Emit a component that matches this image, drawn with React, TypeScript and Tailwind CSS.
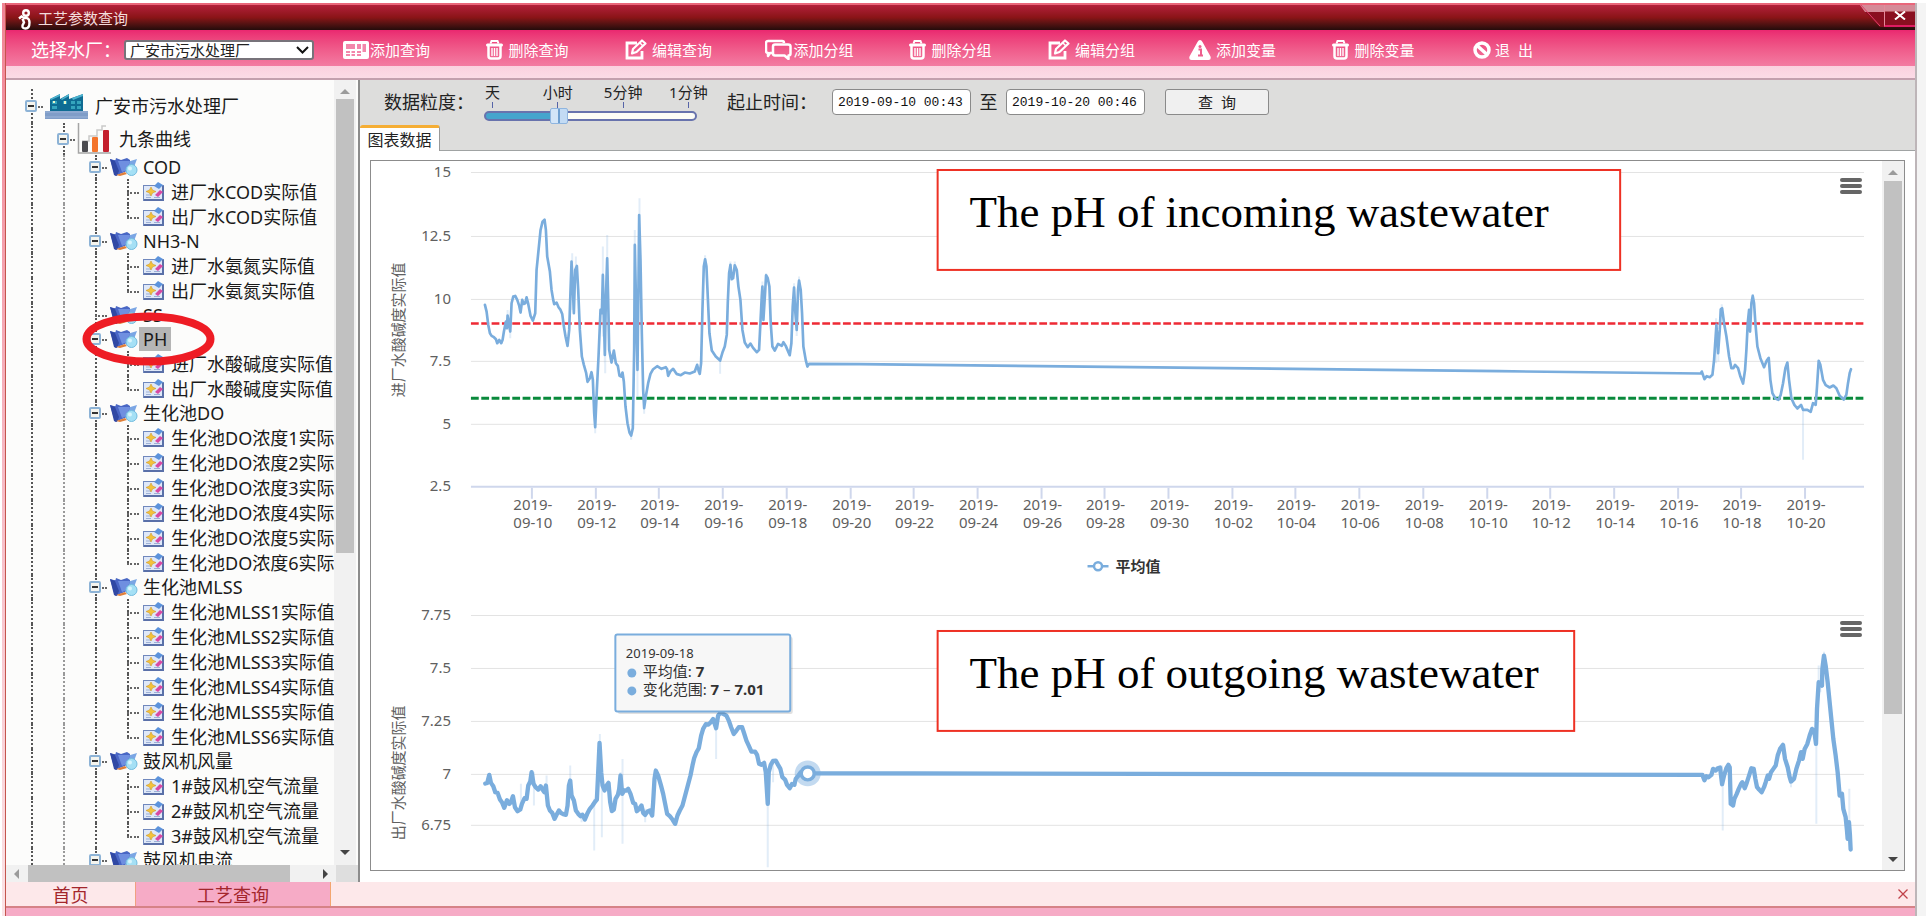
import { useState } from 'react'
import type { ReactNode } from 'react'
import clsx from 'clsx'

type Leaf = string

type Group = {
  name: string
  items: Leaf[]
}

const groups: Group[] = [
  { name: 'COD', items: ['进厂水COD实际值', '出厂水COD实际值'] },
  { name: 'NH3-N', items: ['进厂水氨氮实际值', '出厂水氨氮实际值'] },
  { name: 'SS', items: [] },
  { name: 'PH', items: ['进厂水酸碱度实际值', '出厂水酸碱度实际值'] },
  {
    name: '生化池DO',
    items: [1, 2, 3, 4, 5, 6].map((n) => `生化池DO浓度${n}实际值`),
  },
  {
    name: '生化池MLSS',
    items: [1, 2, 3, 4, 5, 6].map((n) => `生化池MLSS${n}实际值`),
  },
  { name: '鼓风机风量', items: [1, 2, 3].map((n) => `${n}#鼓风机空气流量`) },
  { name: '鼓风机电流', items: [] },
]

const dates = [
  '09-10', '09-12', '09-14', '09-16', '09-18', '09-20', '09-22', '09-24', '09-26', '09-28', '09-30',
  '10-02', '10-04', '10-06', '10-08', '10-10', '10-12', '10-14', '10-16', '10-18', '10-20',
]

// Series points, three units to a pixel
const incoming =
  '375,465 380,485 385,525 390,550 395,558 402,562 408,568 412,580 418,570 424,580 428,570 432,545 438,515 441,535 443,497 447,520 451,545 455,460 460,440 466,438 472,450 478,468 482,488 487,450 492,462 496,460 500,442 505,462 512,498 519,512 526,490 530,360 536,300 542,240 548,215 554,209 558,240 562,320 570,365 575,420 580,450 583,463 590,458 596,472 602,480 607,492 612,530 617,560 623,588 628,540 632,420 635,335 639,420 642,490 646,360 651,348 655,420 660,540 666,620 672,645 679,670 683,696 690,685 695,667 699,690 703,790 706,832 711,720 716,620 722,480 726,490 729,375 732,500 735,615 738,450 742,325 745,450 748,600 755,638 762,602 768,640 774,648 779,678 784,680 788,668 792,695 797,770 803,820 809,848 814,857 819,835 823,600 825,285 829,480 833,660 836,400 838,195 842,330 846,550 850,720 853,775 858,740 865,700 872,672 880,658 892,649 905,657 918,652 922,658 925,678 932,664 940,657 950,672 963,676 975,668 990,671 1005,665 1012,645 1017,665 1020,672 1024,640 1028,480 1032,350 1036,328 1040,350 1044,440 1049,550 1056,602 1068,620 1081,632 1088,608 1095,590 1101,555 1104,460 1108,370 1112,345 1116,388 1120,385 1125,346 1131,360 1136,410 1142,450 1148,540 1155,578 1164,592 1172,581 1180,594 1191,607 1198,600 1202,520 1206,440 1208,410 1211,510 1216,430 1219,376 1224,385 1229,410 1233,520 1238,590 1245,602 1255,582 1266,588 1271,577 1278,588 1290,616 1295,580 1299,470 1303,413 1307,490 1311,540 1315,420 1318,392 1323,420 1327,490 1331,590 1338,630 1343,650 1348,642 1500,643 3420,664 4025,671 4028,665 4036,688 4043,679 4052,682 4060,675 4065,630 4072,525 4077,610 4082,540 4085,478 4089,475 4095,520 4102,560 4110,620 4117,655 4123,655 4128,645 4137,655 4144,680 4152,701 4158,660 4162,600 4166,520 4170,480 4173,545 4177,460 4181,438 4185,460 4189,520 4195,590 4204,625 4215,652 4223,632 4229,624 4234,690 4240,730 4249,746 4258,750 4265,735 4272,700 4279,655 4285,638 4290,690 4297,745 4306,765 4315,776 4326,765 4332,780 4345,780 4355,786 4362,760 4370,765 4374,710 4379,633 4384,645 4392,690 4400,706 4412,713 4423,707 4432,715 4442,738 4454,749 4462,735 4467,700 4472,670 4476,658'

const incomingRange =
  'M637 310V480M648 320V400M729 290V560M735 640V480M742 255V420M736 670V560M839 145V260M833 740V560M825 240V300M706 850V780M814 870V850M853 792V760M443 480V540M451 565V520M1036 316V340M1081 672V620M1112 335V350M1125 335V350M1208 395V420M1219 370V380M1303 400V420M1318 380V400M1311 558V520M4071 505V640M4078 635V560M4088 463V490M4181 432V450M4332 780V930'

const outgoing =
  '376,674 382,672 388,648 393,672 400,682 406,700 413,702 420,722 427,732 433,747 441,724 448,735 453,730 459,712 465,745 473,757 481,752 486,735 494,718 500,720 505,680 511,668 515,640 521,675 527,685 535,692 542,682 548,692 553,700 558,680 564,740 570,755 577,762 584,780 590,768 597,755 603,762 610,766 618,768 623,740 627,680 631,665 635,710 642,725 648,755 655,765 662,772 668,768 675,782 682,765 690,750 698,740 706,728 711,722 715,640 719,552 724,640 728,680 734,695 740,680 746,672 751,730 756,757 762,752 767,720 774,708 778,690 782,650 787,705 793,695 800,695 805,690 812,705 820,732 826,735 831,757 838,750 845,740 850,762 856,768 863,758 870,755 877,770 880,730 884,660 888,635 895,650 903,678 910,705 916,735 922,765 930,772 938,782 946,795 953,770 960,755 968,740 976,710 984,680 992,650 998,620 1003,598 1010,580 1017,568 1024,530 1030,510 1038,496 1046,497 1053,490 1060,480 1069,508 1075,470 1083,460 1090,465 1100,470 1107,485 1114,505 1122,525 1130,515 1137,505 1147,505 1152,520 1160,545 1167,560 1175,578 1186,578 1192,588 1198,615 1205,618 1213,612 1218,640 1224,735 1227,640 1233,618 1240,606 1248,605 1255,618 1262,630 1268,655 1276,662 1282,678 1290,688 1297,675 1304,678 1308,660 1316,650 1323,640 1345,643 4030,648 4036,664 4042,652 4048,655 4057,648 4062,630 4070,635 4076,628 4083,626 4089,676 4095,650 4102,628 4108,618 4112,625 4115,735 4122,740 4126,720 4133,705 4139,690 4146,675 4150,670 4157,688 4163,672 4170,650 4177,628 4184,630 4189,660 4194,685 4200,692 4208,700 4215,685 4220,670 4226,650 4230,660 4236,640 4243,630 4250,620 4256,590 4263,570 4272,558 4278,600 4286,625 4292,655 4296,668 4305,660 4312,630 4320,605 4326,580 4331,600 4337,570 4345,555 4352,530 4359,510 4366,518 4371,555 4374,450 4379,370 4385,375 4389,380 4390,330 4395,290 4400,320 4406,370 4413,440 4418,490 4423,540 4430,590 4436,640 4442,710 4449,705 4453,750 4460,775 4464,815 4466,840 4470,790 4473,830 4475,872'

const outgoingRange =
  'M483 675V740M522 640V740M560 650V700M631 620V700M665 790V760M703 875V720M720 525V580M726 835V640M782 640V700M788 600V855M856 790V750M1069 500V600M1224 720V925M1240 670V610M4089 620V640M4091 676V815M4379 320V400M4372 540V795M4395 278V300M4384 400V360M4471 690V830M4208 708V690M4296 685V660'

function FactoryIcon() {
  return (
    <svg className="-ml-[2px] h-[26px] w-[43px] shrink-0" viewBox="0 0 43 26" aria-hidden="true">
      <path d="M5 18V6l10-5v5l9-5v5l14-5v17z" fill="#0f6c93" />
      <path d="M5 6l10-5v2L6 7zM16 6l8-5v2l-7 4zM27 5l11-4v2l-10 4z" fill="#4db3cf" />
      <path d="M7 8h5v3H7zM18 8h4v3h-4zM26 8h4v3h-4zM32 8h4v3h-4zM7 13h5v3H7zM26 13h4v3h-4zM32 13h4v3h-4z" fill="#35a5bd" />
      <path d="M8 8h2v2H8zM19 8h2v3h-2z" fill="#eaf7c8" />
      <path d="M0 18h43v8H0z" fill="#7f9dc8" />
      <path d="M0 19h43M0 24h43" stroke="#9db4d8" strokeWidth="1" />
    </svg>
  )
}

function CurvesIcon() {
  return (
    <svg className="-ml-[2px] h-[32px] w-[34px] shrink-0" viewBox="0 0 34 32" aria-hidden="true">
      <path d="M1.500 0v30H34" fill="none" stroke="#a5a5a5" strokeWidth="1.500" />
      <path d="M5 18h7v-5h8V7h5V3h4" fill="none" stroke="#c9c9c9" strokeWidth="1.500" />
      <rect x="5" y="18" width="6" height="11" rx="1" fill="#4c4c50" />
      <rect x="15" y="14" width="6" height="15" rx="1" fill="#f4742b" />
      <rect x="26" y="7" width="6" height="22" rx="1" fill="#c4202e" />
    </svg>
  )
}

function FolderIcon() {
  return (
    <svg className="-ml-px h-[20px] w-[28px] shrink-0" viewBox="0 0 28 20" aria-hidden="true">
      <path d="M4 9l2-8 5 2 6-2 3 2v6z" fill="#4a68c4" />
      <path d="M17 5l10-3-3 8-8 6z" fill="#7ba6e4" />
      <path d="M0 2q6 2 10 1l10 1-3 10-12 5z" fill="#4a66c6" />
      <path d="M8 4l12 0-3 9-5 2z" fill="#6f8fe0" />
      <path d="M0 2l4 16 3 1 2-5L5 4z" fill="#3048a4" />
      <path d="M6 18l9-3 2 2-7 2z" fill="#e08039" />
      <circle cx="21.500" cy="13" r="5.500" fill="#a5e0f5" stroke="#74bcdf" strokeWidth="1" />
      <circle cx="20" cy="11.500" r="2" fill="#d9f5fd" />
    </svg>
  )
}

function LeafIcon() {
  return (
    <svg className="h-[20px] w-[22px] shrink-0" viewBox="0 0 22 20" aria-hidden="true">
      <rect x=".5" y="3.500" width="20" height="15" fill="#dfe8f8" stroke="#7088bd" />
      <path d="M1 17h20v2H1zM19 4h2v14h-2z" fill="#5a70a8" />
      <path d="M3 13h5M3 15.500h5M11 15.500h6" stroke="#9db0d6" strokeWidth="1" />
      <path d="M8 5l1.500 3L13 9.500 9.500 11 8 14l-1.500-3L3 9.500 6.500 8z" fill="#f3c33c" stroke="#c98f1e" strokeWidth=".5" />
      <path d="M15 0l5 3-4 4-5-3z" fill="#5c93dc" />
      <path d="M17 8l3 2-5 5-3-2z" fill="#d849a4" />
    </svg>
  )
}

function TrashIcon() {
  return (
    <svg className="h-5 w-[17px]" viewBox="0 0 17 20" fill="none" stroke="currentColor" aria-hidden="true">
      <path d="M4.500 3.500l1-2.500h6l1 2.500" strokeWidth="2" />
      <path d="M1.500 5h14" strokeWidth="3" strokeLinecap="round" />
      <path d="M2.500 5v11q0 2.500 2.500 2.500h7q2.500 0 2.500-2.500V5" strokeWidth="2.500" />
      <path d="M6 8v8M8.500 8v8M11 8v8" strokeWidth="1.400" />
    </svg>
  )
}

function EditIcon() {
  return (
    <svg className="h-[21px] w-[22px]" viewBox="0 0 22 21" fill="none" stroke="currentColor" aria-hidden="true">
      <path d="M12 4H2v15h15v-7" strokeWidth="2.800" />
      <path d="M7 14.500l1-4.500L17 1.500l3.500 3L11.500 13z" strokeWidth="2.200" strokeLinejoin="round" />
      <path d="M15 4l3 3" strokeWidth="1.500" />
    </svg>
  )
}

function CardIcon() {
  return (
    <svg className="h-[18px] w-[26px]" viewBox="0 0 26 18" aria-hidden="true">
      <rect width="26" height="18" rx="2" fill="currentColor" />
      <path d="M3 3h9v5H3zM3 10h4v5H3zM8.500 10H12v5H8.500zM14 3h4v5h-4zM19.500 3H23v8h-3.500zM14 10h4v5h-4z" fill="#ef5f8f" opacity=".75" />
      <path d="M3 12.500h20" stroke="#fff" />
    </svg>
  )
}

function ChatIcon() {
  return (
    <svg className="h-[21px] w-[27px]" viewBox="0 0 27 21" fill="none" stroke="currentColor" strokeWidth="2.500" strokeLinejoin="round" aria-hidden="true">
      <path d="M7 14H5l-2 3v-3q-2 0-2-2V4q0-2 2-2h14q2 0 2 2" />
      <path d="M10 5.500h13q2.500 0 2.500 2v7q0 2-2 2V20l-4-3.500H10q-2 0-2-2v-7q0-2 2-2z" />
    </svg>
  )
}

function AlertIcon() {
  return (
    <svg className="h-5 w-[22px]" viewBox="0 0 22 20" aria-hidden="true">
      <path d="M11 0q1.500 0 2.500 2l8 14.500q1 3.500-2 3.500h-17q-3 0-2-3.500L8.500 2Q9.500 0 11 0z" fill="currentColor" />
      <path d="M9.500 9.500H12V15M9 15.500h5" stroke="#ee5f8e" strokeWidth="2" fill="none" />
      <circle cx="11" cy="6.500" r="1.500" fill="#ee5f8e" />
    </svg>
  )
}

function BanIcon() {
  return (
    <svg className="h-[18px] w-[18px]" viewBox="0 0 18 18" fill="none" stroke="currentColor" strokeWidth="3.500" aria-hidden="true">
      <circle cx="9" cy="9" r="7" />
      <path d="M4 4.500l10 9" />
    </svg>
  )
}

function LogoIcon() {
  return (
    <svg className="h-[21px] w-[13px]" viewBox="0 0 13 21" fill="none" stroke="#fff" strokeWidth="2.400" aria-hidden="true">
      <circle cx="8" cy="4" r="2.800" />
      <path d="M1 9.500l2.500-2 2.500 1.500h3q2.500 1 2.500 4.500 0 6-4 6-3.500 0-3-3l1.500-3-1.500-4" />
    </svg>
  )
}

const actions: { label: string; icon: ReactNode; tight?: boolean }[] = [
  { label: '添加查询', icon: <CardIcon />, tight: true },
  { label: '删除查询', icon: <TrashIcon /> },
  { label: '编辑查询', icon: <EditIcon /> },
  { label: '添加分组', icon: <ChatIcon />, tight: true },
  { label: '删除分组', icon: <TrashIcon /> },
  { label: '编辑分组', icon: <EditIcon /> },
  { label: '添加变量', icon: <AlertIcon /> },
  { label: '删除变量', icon: <TrashIcon /> },
]

function TitleBar() {
  return (
    <header className="flex h-[27px] shrink-0 items-stretch border-t-2 border-[#e9667a] bg-linear-to-b from-[#b3203a] via-[#8a1417] to-[#250b0b] pl-3">
      <div className="flex items-end gap-[7px]">
        <LogoIcon />
        <h1 className="self-center text-[15px] leading-5 text-[#f3dcdc]">工艺参数查询</h1>
      </div>
      <div className="ml-auto flex">
        <svg className="h-[22px] w-6" viewBox="0 0 24 22" aria-hidden="true">
          <path d="M0 0h24v7H5z" fill="#d58b98" />
          <path d="M5 7h19v15h-4z" fill="#8a0f20" />
          <path d="M1 0l19 21" stroke="#e0406a" strokeWidth="1" />
        </svg>
        <button
          type="button"
          aria-label="关闭窗口"
          className="flex h-[22px] w-[31px] items-center justify-center border-b-2 border-l border-b-[#e01c62] border-l-[#e58a9a] bg-linear-to-b from-[#d58b98] from-30% to-[#8a0f20] to-35%"
        >
          <svg className="h-[9px] w-3" viewBox="0 0 12 9" aria-hidden="true">
            <path d="M1 .5l10 8M11 .5l-10 8" stroke="#fff" strokeWidth="2" />
          </svg>
        </button>
      </div>
    </header>
  )
}

function Toolbar() {
  return (
    <div className="shrink-0 border-b-2 border-[#c3a0ae] bg-linear-to-b from-[#f7b3cb] to-[#fbdbe6] pb-3">
      <div className="flex h-9 items-center bg-linear-to-b from-[#ea2770] to-[#f37ba2] pt-[3px] text-white">
        <label htmlFor="plant" className="w-[118px] pl-[25px] text-[18px] leading-6 whitespace-nowrap">
          选择水厂：
        </label>
        <div className="relative w-[190px]">
          <select
            id="plant"
            className="block h-5 w-full appearance-none rounded-[3px] border-2 border-[#77737a] bg-white pl-1 text-[15px] leading-4 text-[#222]"
          >
            <option>广安市污水处理厂</option>
          </select>
          <svg className="pointer-events-none absolute top-[6px] right-[5px] h-2 w-[13px]" viewBox="0 0 13 8" aria-hidden="true">
            <path d="M1 1l5.500 5.500L12 1" fill="none" stroke="#111" strokeWidth="2" />
          </svg>
        </div>
        {actions.map((action) => (
          <button
            key={action.label}
            type="button"
            className={clsx(
              'flex w-[141px] shrink-0 items-center justify-center pl-1 text-[15px] leading-5 whitespace-nowrap',
              action.tight ? 'gap-px' : 'gap-[5px]',
            )}
          >
            {action.icon}
            {action.label}
          </button>
        ))}
        <button type="button" className="flex w-[122px] shrink-0 items-center justify-center gap-1 text-[15px] leading-5">
          <BanIcon />
          <span className="whitespace-pre">退  出</span>
        </button>
      </div>
    </div>
  )
}

function Guide({ light }: { light?: boolean }) {
  return (
    <span className="flex w-8 shrink-0 self-stretch">
      <span className={clsx('ml-4 border-l-2 border-dotted', light ? 'border-[#999]' : 'border-[#555]')} />
    </span>
  )
}

function Elbow({ last }: { last?: boolean }) {
  return (
    <span className="relative w-8 shrink-0 self-stretch">
      <span className={clsx('absolute top-0 left-4 border-l-2 border-dotted border-[#555]', last ? 'h-1/2' : 'h-full')} />
      <span className="absolute top-1/2 left-4 w-3 border-t-2 border-dotted border-[#666]" />
    </span>
  )
}

function Toggle({ label }: { label: string }) {
  return (
    <span className="relative flex w-8 shrink-0 items-center justify-center self-stretch">
      <span className="absolute inset-y-0 left-4 border-l-2 border-dotted border-[#555]" />
      <span className="absolute top-1/2 left-4 w-3 border-t-2 border-dotted border-[#666]" />
      <button
        type="button"
        aria-label={`折叠 ${label}`}
        className="relative flex h-3 w-3 items-center justify-center rounded-[2px] border-2 border-[#8db3d6] bg-[#f4f4ee]"
      >
        <span className="h-[2px] w-[6px] bg-[#333]" />
      </button>
    </span>
  )
}

function Tree() {
  const [selected, setSelected] = useState('PH')

  return (
    <div className="flex w-[328px] flex-col overflow-hidden pt-[9px] pl-[9px] text-[18px] leading-6 whitespace-nowrap text-[#1a1a1a]">
      <div className="flex h-[34px] shrink-0 items-center">
        <Toggle label="广安市污水处理厂" />
        <FactoryIcon />
        <span className="pl-[7px]">广安市污水处理厂</span>
      </div>
      <div className="flex h-8 shrink-0 items-center">
        <Guide />
        <Toggle label="九条曲线" />
        <CurvesIcon />
        <span className="pl-2">九条曲线</span>
      </div>
      {groups.map((group) => (
        <div key={group.name} className="shrink-0">
          <div className="relative flex h-6 items-center">
            <Guide />
            <Guide light />
            {group.name === 'SS' ? <Elbow /> : <Toggle label={group.name} />}
            <FolderIcon />
            <button
              type="button"
              onClick={() => setSelected(group.name)}
              className={clsx('ml-px px-1', selected === group.name && 'bg-[#b5b5b5]')}
            >
              {group.name}
            </button>
            {group.name === 'PH' && (
              <svg className="pointer-events-none absolute -top-[15px] left-[67px] z-10 h-[54px] w-[133px]" viewBox="0 0 133 54" aria-hidden="true">
                <ellipse cx="66.500" cy="27" rx="62" ry="22.500" fill="none" stroke="#ee1c24" strokeWidth="8" />
              </svg>
            )}
          </div>
          {group.items.map((item, i) => (
            <div key={item} className="flex h-[25px] items-center">
              <Guide />
              <Guide light />
              <Guide />
              <Elbow last={i === group.items.length - 1} />
              <LeafIcon />
              <span className="pl-[6px]">{item}</span>
            </div>
          ))}
        </div>
      ))}
    </div>
  )
}

function Arrow({ dir, dark }: { dir: 'up' | 'down' | 'left' | 'right'; dark?: boolean }) {
  const shapes = {
    up: 'M0 7l5-5 5 5z',
    down: 'M0 3l5 5 5-5z',
    left: 'M7 0L2 5l5 5z',
    right: 'M3 0l5 5-5 5z',
  }

  return (
    <svg className="h-[10px] w-[10px] shrink-0" viewBox="0 0 10 10" aria-hidden="true">
      <path d={shapes[dir]} fill={dark ? '#444' : '#9b9b9b'} />
    </svg>
  )
}

function Sidebar() {
  return (
    <aside className="flex w-[352px] shrink-0 flex-col bg-[#fcfcfb]">
      <div className="flex min-h-0 flex-1">
        <Tree />
        <div className="flex w-[22px] shrink-0 flex-col items-center bg-[#f1f1f1] pt-1 pb-2">
          <div className="flex h-[15px] items-center">
            <Arrow dir="up" />
          </div>
          <div className="h-[454px] w-[18px] bg-[#c1c1c1]" />
          <div className="mt-auto">
            <Arrow dir="down" dark />
          </div>
        </div>
      </div>
      <div className="flex h-[17px] shrink-0">
        <div className="flex flex-1 items-center bg-[#f1f1f1] px-[6px]">
          <Arrow dir="left" />
          <div className="ml-[6px] h-full w-[262px] bg-[#c1c1c1]" />
          <span className="ml-auto flex">
            <Arrow dir="right" dark />
          </span>
        </div>
        <div className="w-[22px] bg-[#dedede]" />
      </div>
    </aside>
  )
}

function Filters() {
  const [step, setStep] = useState(1)

  return (
    <div className="flex h-[45px] shrink-0 items-start pl-6">
      <label htmlFor="grain" className="mt-[10px] w-[92px] text-[18px] leading-6 whitespace-nowrap text-[#222]">
        数据粒度：
      </label>
      <div className="mt-[2px] w-[229px] text-[15px] leading-5 text-[#222]">
        <div className="-mx-4 grid grid-cols-4 text-center">
          <span>天</span>
          <span>小时</span>
          <span>5分钟</span>
          <span>1分钟</span>
        </div>
        <div className="mx-2 flex h-[6px] justify-between px-2">
          {[0, 1, 2, 3].map((n) => (
            <span key={n} className="w-px bg-[#5664a8]" />
          ))}
        </div>
        <input
          id="grain"
          type="range"
          min={0}
          max={3}
          value={step}
          onChange={(e) => setStep(Number(e.target.value))}
          style={{
            backgroundImage: `linear-gradient(to right, #45a5cd ${(step / 3) * 100}%, #fdfdf6 ${(step / 3) * 100}%)`,
          }}
          className="mx-2 mt-[3px] block h-[10px] w-[213px] appearance-none rounded-full border-2 border-[#6873ad] [&::-webkit-slider-thumb]:h-4 [&::-webkit-slider-thumb]:w-[18px] [&::-webkit-slider-thumb]:appearance-none [&::-webkit-slider-thumb]:rounded-[2px] [&::-webkit-slider-thumb]:border [&::-webkit-slider-thumb]:border-[#8fb5df] [&::-webkit-slider-thumb]:bg-[linear-gradient(to_right,#d3e5f8_44%,#6f9fd0_44%,#6f9fd0_56%,#c3dbf4_56%)]"
        />
      </div>
      <label htmlFor="from" className="mt-[10px] ml-[22px] w-[105px] text-[18px] leading-6 whitespace-nowrap text-[#222]">
        起止时间：
      </label>
      <input
        id="from"
        defaultValue="2019-09-10 00:43"
        className="mt-[9px] h-[26px] w-[139px] rounded-[4px] border border-[#8a8a8a] bg-white px-[5px] font-['Liberation_Mono','Noto_Sans_CJK_SC',monospace] text-[13px] text-[#111]"
      />
      <label htmlFor="to" className="mt-[10px] w-[35px] text-center text-[18px] leading-6 text-[#222]">
        至
      </label>
      <input
        id="to"
        defaultValue="2019-10-20 00:46"
        className="mt-[9px] h-[26px] w-[139px] rounded-[4px] border border-[#8a8a8a] bg-white px-[5px] font-['Liberation_Mono','Noto_Sans_CJK_SC',monospace] text-[13px] text-[#111]"
      />
      <button
        type="button"
        className="mt-[9px] ml-5 h-[26px] w-[104px] rounded-[3px] border border-[#8a8a8a] bg-[#f0f0f0] text-[15px] leading-5 whitespace-pre text-[#222]"
      >
        查  询
      </button>
    </div>
  )
}

type AxisTick = { label: string; y: number }

type ChartProps = {
  title: string
  height: number
  ticks: AxisTick[]
  points: string
  range: string
  lineWidth: number
  seriesShift: number
  children?: ReactNode
}

function Chart({ title, height, ticks, points, range, lineWidth, seriesShift, children }: ChartProps) {
  return (
    <div className="relative">
      <svg
        className="block h-auto w-full font-['Noto_Sans','Noto_Sans_CJK_SC',sans-serif]"
        viewBox={`0 0 1512 ${height}`}
        role="img"
        aria-label={title}
      >
        {ticks.map((tick) => (
          <g key={tick.label}>
            {tick.label !== '2.5' && <path d={`M100 ${tick.y}H1494`} stroke="#e3e3e3" strokeWidth="1" />}
            <text x="80" y={tick.y + 5} textAnchor="end" fontSize="15" fill="#606060">
              {tick.label}
            </text>
          </g>
        ))}
        <text transform="translate(33 169) rotate(-90)" textAnchor="middle" fontSize="15" fill="#606060">
          {title}
        </text>
        {children}
        <g transform={`translate(-11 ${seriesShift}) scale(.33333)`} fill="none" stroke="#7aaddd">
          <path d={range} strokeWidth="6" opacity=".22" />
          <polyline points={points} strokeWidth={lineWidth} strokeLinejoin="round" strokeLinecap="round" />
        </g>
      </svg>
      <button type="button" aria-label="图表菜单" className="absolute top-[17px] right-[20px] flex w-[22px] flex-col gap-[2px]">
        <span className="h-1 w-full rounded-full bg-[#666]" />
        <span className="h-1 w-full rounded-full bg-[#666]" />
        <span className="h-1 w-full rounded-full bg-[#666]" />
      </button>
    </div>
  )
}

function Callout({ y, width, children }: { y: number; width: number; children: string }) {
  return (
    <svg
      className="pointer-events-none absolute top-0 left-0 h-auto w-full font-['Liberation_Serif',serif]"
      viewBox="0 0 1512 265"
      aria-hidden="true"
    >
      <rect x="567" y={y} width={width} height="100" fill="#fff" stroke="#ee3124" strokeWidth="2" />
      <text x="599" y={y + 57} fontSize="45" fill="#000">
        {children}
      </text>
    </svg>
  )
}

function IncomingChart() {
  return (
    <div className="relative">
      <Chart
        title="进厂水酸碱度实际值"
        height={443}
        ticks={[
          { label: '15', y: 11.5 },
          { label: '12.5', y: 75.5 },
          { label: '10', y: 138.5 },
          { label: '7.5', y: 200.5 },
          { label: '5', y: 263.5 },
          { label: '2.5', y: 325.5 },
        ]}
        points={incoming}
        range={incomingRange}
        lineWidth={8}
        seriesShift={-11}
      >
        <path d="M100 326H1494" stroke="#cfd7ec" strokeWidth="2" />
        {dates.map((date, i) => {
          const x = 161 + Math.round(i * 63.7)
          return (
            <g key={date}>
              <path d={`M${x} 327v11`} stroke="#cfd7ec" strokeWidth="2" />
              <text textAnchor="middle" fontSize="15" fill="#606060">
                <tspan x={x + 1} y="349">2019-</tspan>
                <tspan x={x + 1} y="367">{date}</tspan>
              </text>
            </g>
          )
        })}
        <path d="M100 162.500H1494" stroke="#ee2a35" strokeWidth="2.500" strokeDasharray="7.800 2.540" />
        <path d="M100 237.500H1494" stroke="#0a8a3c" strokeWidth="3" strokeDasharray="7.800 2.540" />
        <path d="M717 405.500h21" stroke="#7aaddd" strokeWidth="2.500" />
        <circle cx="727.500" cy="405.500" r="4" fill="#fff" stroke="#7aaddd" strokeWidth="2.500" />
        <text x="745" y="411" fontSize="15" fontWeight="bold" fill="#333">
          平均值
        </text>
      </Chart>
      <Callout y={9} width={683}>The pH of incoming wastewater</Callout>
    </div>
  )
}

function OutgoingChart() {
  return (
    <div className="relative">
      <Chart
        title="出厂水酸碱度实际值"
        height={265}
        ticks={[
          { label: '7.75', y: 11.5 },
          { label: '7.5', y: 64.5 },
          { label: '7.25', y: 117.5 },
          { label: '7', y: 170.5 },
          { label: '6.75', y: 221.5 },
        ]}
        points={outgoing}
        range={outgoingRange}
        lineWidth={13}
        seriesShift={-45}
      />
      <svg
        className="pointer-events-none absolute top-0 left-0 h-auto w-full font-['Noto_Sans','Noto_Sans_CJK_SC',sans-serif]"
        viewBox="0 0 1512 265"
        aria-hidden="true"
      >
        <circle cx="437" cy="169.500" r="13" fill="#7aaddd" opacity=".45" />
        <circle cx="437" cy="169.500" r="6.500" fill="#fff" stroke="#7aaddd" strokeWidth="3.500" />
        <rect x="247" y="33" width="175" height="77" rx="2" fill="#000" opacity=".12" />
        <rect x="244.500" y="30.500" width="175" height="77" rx="2" fill="#f7f7f7" stroke="#7aaddd" strokeWidth="2" />
        <text x="255" y="54" fontSize="13" fill="#333">2019-09-18</text>
        <circle cx="261" cy="69" r="4.500" fill="#7aaddd" />
        <circle cx="261" cy="87" r="4.500" fill="#7aaddd" />
        <text x="272" y="73" fontSize="15" fill="#333">
          平均值: <tspan fontWeight="bold">7</tspan>
        </text>
        <text x="272" y="91" fontSize="15" fill="#333">
          变化范围: <tspan fontWeight="bold">7</tspan> – <tspan fontWeight="bold">7.01</tspan>
        </text>
      </svg>
      <Callout y={27} width={637}>The pH of outgoing wastewater</Callout>
    </div>
  )
}

function Main() {
  return (
    <main className="flex min-w-0 flex-1 flex-col border-l-2 border-[#8c8c8c] bg-white">
      <div className="shrink-0 border-b border-[#a0a3a3] bg-[#dddddc]">
        <Filters />
        <div className="flex">
          <button
            type="button"
            className="-mb-px h-[26px] w-[80px] rounded-t-[3px] border-t-[3px] border-r border-t-[#f5ae35] border-r-[#999] bg-white text-[16px] leading-5 whitespace-nowrap text-[#222]"
          >
            图表数据
          </button>
        </div>
      </div>
      <div className="mx-[10px] mt-[9px] mb-[11px] flex min-h-0 flex-1 border border-[#8c8c8c]">
        <div className="min-w-0 flex-1 overflow-hidden">
          <IncomingChart />
          <OutgoingChart />
        </div>
        <div className="flex w-[22px] shrink-0 flex-col items-center bg-[#f1f1f1] pt-1 pb-[6px]">
          <div className="flex h-4 items-center">
            <Arrow dir="up" />
          </div>
          <div className="h-[533px] w-[18px] bg-[#c1c1c1]" />
          <div className="mt-auto">
            <Arrow dir="down" dark />
          </div>
        </div>
      </div>
    </main>
  )
}

function BottomTabs() {
  return (
    <footer className="shrink-0 border-b-8 border-[#f6abc6]">
      <nav className="flex h-[26px] items-stretch border-b-2 border-[#d68287] bg-[#fde8ea] text-[18px] leading-6 text-[#a3262c]">
        <a href="#home" className="flex w-[130px] items-center justify-center border-r border-[#f0a080] pt-[2px]">
          首页
        </a>
        <a href="#query" className="flex w-[195px] items-center justify-center border-r border-[#f3a56f] bg-[#f6abc6] pt-[2px]">
          工艺查询
        </a>
        <button type="button" aria-label="关闭标签" className="mr-[2px] ml-auto flex w-5 items-center justify-center">
          <svg className="h-[10px] w-[10px]" viewBox="0 0 10 10" aria-hidden="true">
            <path d="M.5.5l9 9M9.500.5l-9 9" stroke="#c0424a" strokeWidth="1.300" />
          </svg>
        </button>
      </nav>
    </footer>
  )
}

export default function App() {
  return (
    <div className="flex h-screen bg-white pt-[3px] pr-1 pb-1 pl-[2px] font-['Noto_Sans','Noto_Sans_CJK_SC',sans-serif]">
      <div className="w-[3px] shrink-0 bg-linear-to-b from-[#f08494] via-[#f6b9c4] to-[#fbe3e6]" />
      <div className="flex min-w-0 flex-1 flex-col border-r-2 border-l border-r-[#bdb5b8] border-l-[#c4564e]">
        <TitleBar />
        <Toolbar />
        <div className="flex min-h-0 flex-1">
          <Sidebar />
          <Main />
        </div>
        <BottomTabs />
      </div>
      <div className="w-[9px] shrink-0 bg-[#f4f4f4]" />
    </div>
  )
}
